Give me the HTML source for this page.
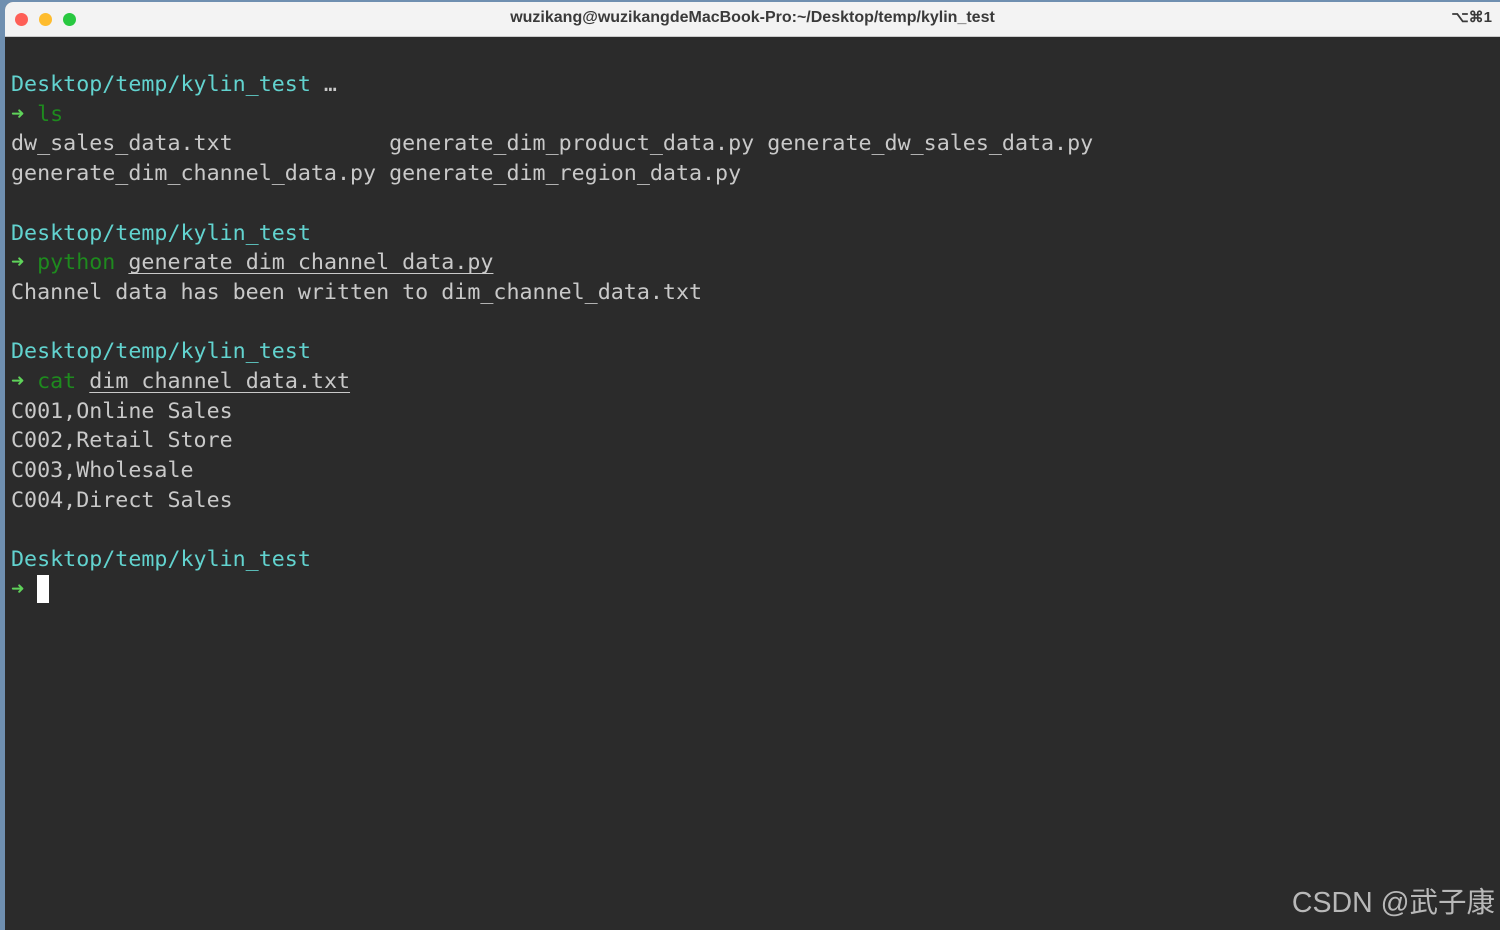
<!DOCTYPE html>
<html><head><meta charset="utf-8"><style>
html,body{margin:0;padding:0;width:1500px;height:930px;overflow:hidden;background:#6f8fb0;}
.win{position:absolute;left:5px;top:2px;width:1495px;height:928px;background:#2b2b2b;border-radius:8px 0 0 0;overflow:hidden;}
.tb{position:absolute;left:0;top:0;width:100%;height:34px;background:#f3f3f3;border-bottom:1px solid #c9c9c9;font-family:"Liberation Sans",sans-serif;font-weight:bold;font-size:16px;color:#3a3a3a;}
.tb .t{position:absolute;left:0;right:0;top:7px;text-align:center;}
.tb .k{position:absolute;right:8px;top:6px;font-size:15px;}
.dot{position:absolute;top:11px;width:13px;height:13px;border-radius:50%;}
.term{position:absolute;left:6px;top:68px;font-family:"DejaVu Sans Mono",monospace;font-size:21.66px;line-height:29.7px;color:#c9c9c9;white-space:pre;}
.c{color:#62d3cf}.a{color:#5fd35a;font-weight:bold}.g{color:#1e8a1e}
.u{text-decoration:underline;text-underline-offset:4px;text-decoration-thickness:1px;text-decoration-skip-ink:none}
.cur{display:inline-block;width:12px;height:28px;background:#fff;vertical-align:-7px}
.wm{position:absolute;right:5px;bottom:9px;font-family:"Liberation Sans","Noto Sans CJK SC",sans-serif;font-size:28.5px;color:#b8b8b8;}
</style></head><body>
<div class="win">
<div class="tb"><div class="dot" style="left:10px;background:#fe5f57"></div><div class="dot" style="left:34px;background:#febc2e"></div><div class="dot" style="left:58px;background:#28c840"></div>
<div class="t">wuzikang@wuzikangdeMacBook-Pro:~/Desktop/temp/kylin_test</div><div class="k">⌥⌘1</div></div>
<div class="term"><span class="c">Desktop/temp/kylin_test</span> …
<span class="a">➜</span> <span class="g">ls</span>
dw_sales_data.txt            generate_dim_product_data.py generate_dw_sales_data.py
generate_dim_channel_data.py generate_dim_region_data.py

<span class="c">Desktop/temp/kylin_test</span>
<span class="a">➜</span> <span class="g">python</span> <span class="u">generate_dim_channel_data.py</span>
Channel data has been written to dim_channel_data.txt

<span class="c">Desktop/temp/kylin_test</span>
<span class="a">➜</span> <span class="g">cat</span> <span class="u">dim_channel_data.txt</span>
C001,Online Sales
C002,Retail Store
C003,Wholesale
C004,Direct Sales

<span class="c">Desktop/temp/kylin_test</span>
<span class="a">➜</span> <span class="cur"></span></div>
</div>
<div class="wm">CSDN @武子康</div>
</body></html>
